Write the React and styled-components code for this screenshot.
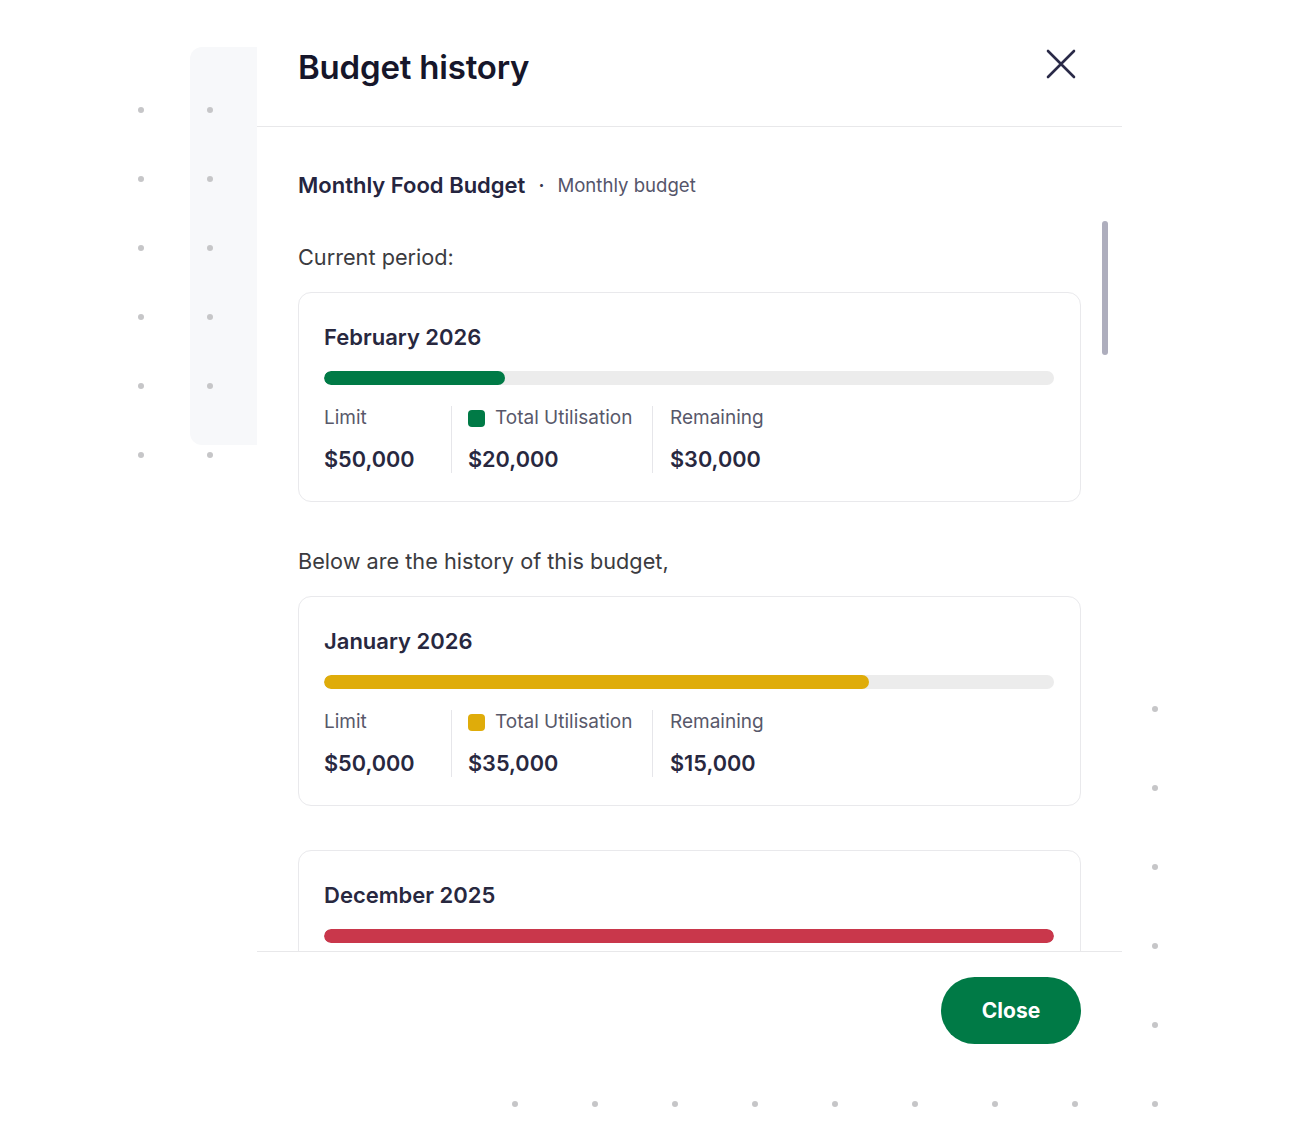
import React from 'react';
import styled, { createGlobalStyle } from 'styled-components';

const GlobalStyle = createGlobalStyle`
  html, body {
    margin: 0;
    padding: 0;
    background: #ffffff;
    font-family: Inter, "Noto Sans", sans-serif;
    -webkit-font-smoothing: antialiased;
  }
`;

const periods = [
  { title: 'February 2026', color: '#007a46', fill: 24.8, limit: '$50,000', used: '$20,000', left: '$30,000' },
  { title: 'January 2026', color: '#dfac0a', fill: 74.7, limit: '$50,000', used: '$35,000', left: '$15,000' },
  { title: 'December 2025', color: '#c9374b', fill: 100, limit: '$50,000', used: '$50,000', left: '$0' }
];

const leftDots = [];
[141, 210].forEach((x) => {
  for (let k = 0; k < 6; k++) leftDots.push({ x, y: 110 + k * 69 });
});
const rightDots = [];
for (let k = 0; k < 6; k++) rightDots.push({ x: 1155, y: 709 + k * 79 });
for (let k = 0; k < 8; k++) rightDots.push({ x: 515 + k * 80, y: 1104 });

function Period({ p, top }) {
  return (
    <Card $top={top}>
      <CardTitle>{p.title}</CardTitle>
      <Track>
        <Fill $color={p.color} style={{ width: p.fill + '%' }} />
      </Track>
      <Stats>
        <Stat $width="127px">
          <Label>Limit</Label>
          <Value>{p.limit}</Value>
        </Stat>
        <Stat $width="201px" $divided>
          <Label>
            <Swatch $color={p.color} />
            Total Utilisation
          </Label>
          <Value>{p.used}</Value>
        </Stat>
        <Stat $divided $pad="17px">
          <Label>Remaining</Label>
          <Value>{p.left}</Value>
        </Stat>
      </Stats>
    </Card>
  );
}

export default function App() {
  return (
    <Page>
      <GlobalStyle />
      <BackCard />
      {leftDots.concat(rightDots).map((d, i) => (
        <Dot key={i} style={{ left: d.x - 3, top: d.y - 3 }} />
      ))}

      <Modal>
        <Header>
          <Title>Budget history</Title>
          <CloseIcon aria-label="Close">
            <svg width="30" height="30" viewBox="0 0 30 30" fill="none">
              <path d="M2 2 L28 28 M28 2 L2 28" stroke="#2a2a48" strokeWidth="2.6" strokeLinecap="round" />
            </svg>
          </CloseIcon>
        </Header>

        <Body>
          <Content>
            <BudgetRow>
              <BudgetName>Monthly Food Budget</BudgetName>
              <Sep>·</Sep>
              <BudgetType>Monthly budget</BudgetType>
            </BudgetRow>

            <Caption $mt="44px">Current period:</Caption>
            <Period p={periods[0]} top="21px" />

            <Caption $mt="45px">Below are the history of this budget,</Caption>
            <Period p={periods[1]} top="21px" />
            <Period p={periods[2]} top="44px" />
          </Content>
          <Thumb />
        </Body>

        <Footer>
          <PrimaryButton>Close</PrimaryButton>
        </Footer>
      </Modal>
    </Page>
  );
}

const Page = styled.div`
  position: relative;
  width: 1296px;
  height: 1132px;
  overflow: hidden;
  background: #ffffff;
`;

const BackCard = styled.div`
  position: absolute;
  left: 190px;
  top: 47px;
  width: 120px;
  height: 398px;
  border-radius: 12px;
  background: #f7f8fa;
`;

const Dot = styled.span`
  position: absolute;
  width: 6px;
  height: 6px;
  border-radius: 50%;
  background: #c6c6c8;
`;

const Modal = styled.div`
  position: relative;
  margin-left: 257px;
  width: 865px;
  display: flex;
  flex-direction: column;
  background: #ffffff;
`;

const Header = styled.div`
  height: 126px;
  display: flex;
  align-items: center;
  justify-content: space-between;
  padding: 0 46px 0 41px;
  border-bottom: 1.5px solid #e8e8ea;
  box-sizing: content-box;
`;

const Title = styled.h1`
  margin: 0;
  padding-top: 8px;
  font-size: 33px;
  line-height: 40px;
  font-weight: 600;
  color: #16162a;
  letter-spacing: -0.2px;
`;

const CloseIcon = styled.div`
  display: flex;
  padding-top: 1px;
`;

const Body = styled.div`
  position: relative;
  height: 824px;
  overflow: hidden;
  border-bottom: 1.5px solid #e8e8ea;
`;

const Content = styled.div`
  padding: 44px 41px 0 41px;
`;

const Thumb = styled.div`
  position: absolute;
  left: 845px;
  top: 94px;
  width: 6px;
  height: 134px;
  border-radius: 3px;
  background: #aeaebd;
`;

const BudgetRow = styled.div`
  display: flex;
  align-items: center;
  height: 28px;
`;

const BudgetName = styled.span`
  font-size: 22px;
  font-weight: 600;
  color: #25253f;
`;

const Sep = styled.span`
  margin: 0 13px 0 13px;
  font-size: 18px;
  font-weight: 700;
  color: #3a3a50;
`;

const BudgetType = styled.span`
  font-size: 18.6px;
  color: #55556a;
`;

const Caption = styled.p`
  margin: ${(p) => p.$mt} 0 0 0;
  font-size: 21.7px;
  line-height: 28px;
  color: #3b3b40;
`;

const Card = styled.div`
  margin-top: ${(p) => p.$top};
  padding: 30px 26px 28px 25px;
  border: 1.5px solid #e9e9ec;
  border-radius: 13px;
`;

const CardTitle = styled.div`
  font-size: 22px;
  line-height: 28px;
  font-weight: 600;
  color: #28283f;
`;

const Track = styled.div`
  margin-top: 20px;
  height: 14px;
  border-radius: 7px;
  background: #ececec;
  overflow: hidden;
`;

const Fill = styled.div`
  height: 100%;
  border-radius: 7px;
  background: ${(p) => p.$color};
`;

const Stats = styled.div`
  display: flex;
  margin-top: 21px;
`;

const Stat = styled.div`
  display: flex;
  flex-direction: column;
  gap: 15px;
  width: ${(p) => p.$width || 'auto'};
  box-sizing: border-box;
  padding-left: ${(p) => (p.$divided ? p.$pad || '16px' : '0')};
  border-left: ${(p) => (p.$divided ? '1.5px solid #e6e6ea' : 'none')};
`;

const Label = styled.div`
  display: flex;
  align-items: center;
  gap: 10px;
  font-size: 19px;
  line-height: 24px;
  color: #58586a;
`;

const Swatch = styled.span`
  width: 17px;
  height: 17px;
  border-radius: 4px;
  background: ${(p) => p.$color};
`;

const Value = styled.div`
  font-size: 21.7px;
  line-height: 28px;
  font-weight: 600;
  color: #28283f;
`;

const Footer = styled.div`
  display: flex;
  justify-content: flex-end;
  padding: 25px 41px 0 41px;
`;

const PrimaryButton = styled.button`
  width: 140px;
  height: 67px;
  border: none;
  border-radius: 34px;
  background: #007a46;
  color: #ffffff;
  font-family: Inter, "Noto Sans", sans-serif;
  font-size: 21px;
  font-weight: 700;
  cursor: pointer;
`;
